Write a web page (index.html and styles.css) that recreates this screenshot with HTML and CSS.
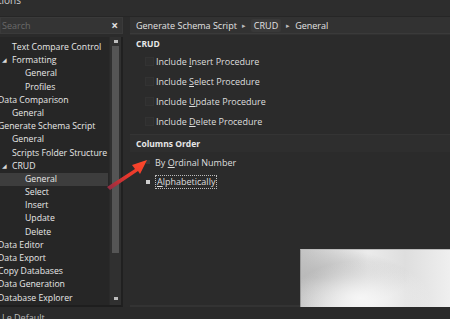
FILE: index.html
```html
<!DOCTYPE html>
<html lang="en">
<head>
    <meta charset="UTF-8">
    <title>Options</title>
    <link rel="stylesheet" href="styles.css">
</head>
<body>
    <div class="window">
        <div class="title-strip"><span class="title">tions</span></div>

        <div class="main">
            <div class="sidebar">
                <div class="search">
                    <span class="placeholder">Search</span>
                    <span class="clear">&#215;</span>
                </div>
                <div class="tree-box">
                    <ul class="tree">
                        <li class="lvl1">Text Compare Control</li>
                        <li class="lvl1 open"><span class="caret">&#9698;</span>Formatting</li>
                        <li class="lvl2">General</li>
                        <li class="lvl2">Profiles</li>
                        <li class="lvl0">Data Comparison</li>
                        <li class="lvl1">General</li>
                        <li class="lvl0">Generate Schema Script</li>
                        <li class="lvl1">General</li>
                        <li class="lvl1">Scripts Folder Structure</li>
                        <li class="lvl1 open"><span class="caret">&#9698;</span>CRUD</li>
                        <li class="lvl2 selected">General</li>
                        <li class="lvl2">Select</li>
                        <li class="lvl2">Insert</li>
                        <li class="lvl2">Update</li>
                        <li class="lvl2">Delete</li>
                        <li class="lvl0">Data Editor</li>
                        <li class="lvl0">Data Export</li>
                        <li class="lvl0">Copy Databases</li>
                        <li class="lvl0">Data Generation</li>
                        <li class="lvl0">Database Explorer</li>
                    </ul>
                    <div class="scrollbar">
                        <span class="arrow-up"></span>
                        <div class="thumb"></div>
                        <span class="arrow-down"></span>
                    </div>
                </div>
            </div>

            <div class="content">
                <div class="breadcrumb">
                    <span>Generate Schema Script</span>
                    <span class="sep">&#9656;</span>
                    <span class="crumb-box">CRUD</span>
                    <span class="sep">&#9656;</span>
                    <span>General</span>
                </div>
                <div class="page">
                    <div class="group-title">CRUD</div>
                    <div class="options">
                        <label class="check"><span class="box"></span><span>Include <u>I</u>nsert Procedure</span></label>
                        <label class="check"><span class="box"></span><span>Include <u>S</u>elect Procedure</span></label>
                        <label class="check"><span class="box"></span><span>Include <u>U</u>pdate Procedure</span></label>
                        <label class="check"><span class="box"></span><span>Include <u>D</u>elete Procedure</span></label>
                    </div>
                    <div class="group-title band">Columns Order</div>
                    <div class="radios">
                        <label class="radio"><span class="dot"></span><span>By <u>O</u>rdinal Number</span></label>
                        <label class="radio"><span class="dot on"></span><span class="focus"><u>A</u>lphabetically</span></label>
                    </div>
                    <div class="blur-patch"></div>
                </div>
            </div>
        </div>

        <div class="footer"><span class="footer-text">Le Default</span></div>

        <!-- annotation arrow drawn on top of the screenshot -->
        <svg class="red-arrow" width="46" height="34" viewBox="0 0 46 34">
            <defs>
                <linearGradient id="arrowFill" x1="0" y1="1" x2="1" y2="0">
                    <stop offset="0" stop-color="#8a2a44"/>
                    <stop offset="0.5" stop-color="#e8372c"/>
                    <stop offset="1" stop-color="#ff4a2a"/>
                </linearGradient>
            </defs>
            <path d="M1 30 L29 12 L26 8 L41 3 L34 17 L32 14 L4 33 Z" fill="url(#arrowFill)"/>
        </svg>
    </div>
</body>
</html>
```

FILE: styles.css
```css
* {
    box-sizing: border-box;
}

body {
    margin: 0;
    background: #2b2b2b;
    font-family: "Open Sans", "Noto Sans", sans-serif;
    font-size: 9px;
    color: #e6e6e6;
}

.window {
    position: relative;
    width: 450px;
    height: 319px;
    overflow: hidden;
    background: #2b2b2b;
}

.title-strip {
    height: 17px;
    background: #2d2d2d;
    border-bottom: 1px solid #262626;
    position: relative;
}

.title {
    position: absolute;
    top: -7px;
    left: -2px;
    font-size: 10px;
    color: #cfcfcf;
}

.main {
    display: flex;
    height: 290px;
}

.sidebar {
    width: 123px;
    display: flex;
    flex-direction: column;
}

.search {
    height: 17px;
    background: #343434;
    border: 1px solid #3a3a3a;
    display: flex;
    align-items: center;
    justify-content: space-between;
    padding: 0 4px 0 1px;
}

.placeholder {
    color: #6a6a6a;
}

.clear {
    font-size: 12px;
    font-weight: bold;
    color: #e0e0e0;
    line-height: 1;
}

.tree-box {
    flex: 1;
    display: flex;
    margin-top: 3px;
    background: #262626;
    border-right: 2px solid #202020;
    border-bottom: 2px solid #1e1e1e;
}

.tree {
    flex: 1;
    list-style: none;
    margin: 0;
    padding: 4px 0 0 0;
    overflow: hidden;
    font-size: 8.7px;
}

.tree li {
    height: 13.2px;
    line-height: 13.2px;
    white-space: nowrap;
    color: #e8e8e8;
    position: relative;
}

.lvl0 {
    padding-left: 0;
    margin-left: -2px;
}

.lvl1 {
    padding-left: 12px;
}

.lvl2 {
    padding-left: 25px;
}

.tree li.selected {
    background: #3d3d3d;
    margin-right: 1px;
}

.caret {
    position: absolute;
    left: 2px;
    font-size: 6px;
    color: #d8d8d8;
}

.scrollbar {
    width: 12px;
    background: #303030;
    border-left: 1px solid #2a2a2a;
    display: flex;
    flex-direction: column;
    align-items: center;
    padding: 3px 0 5px;
}

.arrow-up,
.arrow-down {
    width: 4px;
    height: 3px;
    background: #bdbdbd;
}

.thumb {
    width: 7px;
    height: 207px;
    margin: 3px 0 auto;
    background: #555555;
}

.content {
    flex: 1;
    margin-left: 7px;
    display: flex;
    flex-direction: column;
}

.breadcrumb {
    height: 17px;
    background: #323232;
    border-bottom: 1px solid #3a3a3a;
    display: flex;
    align-items: center;
    gap: 5px;
    padding-left: 6px;
    color: #e2e2e2;
}

.sep {
    font-size: 7px;
    color: #bbbbbb;
}

.crumb-box {
    background: #393939;
    border-radius: 2px;
    padding: 0 3px;
}

.page {
    flex: 1;
    position: relative;
    border-bottom: 2px solid #333333;
}

.group-title {
    font-weight: bold;
    font-size: 8.5px;
    color: #e8e8e8;
    padding: 3px 0 3px 6px;
    border-top: 1px solid #313131;
}

.group-title.band {
    margin-top: 7px;
    background: #2e2e2e;
    border-top: 1px solid #343434;
}

.options {
    display: flex;
    flex-direction: column;
    gap: 8px;
    padding: 3px 0 0 15px;
}

.check,
.radio {
    display: flex;
    align-items: center;
    height: 12px;
    color: #dedede;
    white-space: nowrap;
}

.box {
    width: 9px;
    height: 9px;
    margin-right: 2px;
    background: #2e2e2e;
    border: 1px solid #333333;
}

.radios {
    display: flex;
    flex-direction: column;
    gap: 8px;
    padding: 4px 0 0 16px;
}

.dot {
    width: 4px;
    height: 4px;
    margin-right: 5px;
    background: #3a3a3a;
}

.dot.on {
    background: #cfcfcf;
}

.focus {
    border: 1px dotted #bdbdbd;
    padding: 0 1px;
    line-height: 12px;
}

.blur-patch {
    position: absolute;
    right: 0;
    bottom: -14px;
    width: 150px;
    height: 70px;
    background:
        radial-gradient(ellipse at 40% 70%, #f6f6f6 0%, rgba(246, 246, 246, 0) 55%),
        radial-gradient(ellipse at 10% 40%, #b8b8b8 0%, rgba(184, 184, 184, 0) 50%),
        linear-gradient(90deg, #c4c4c4 0%, #d6d6d6 20%, #ebebeb 45%, #dedede 70%, #efefef 100%);
    border-left: 1px solid #9a9a9a;
    border-top: 1px solid #bcbcbc;
}

.footer {
    height: 12px;
    position: relative;
    background: #2a2a2a;
}

.footer-text {
    position: absolute;
    left: 2px;
    top: 4px;
    color: #bdbdbd;
}

.red-arrow {
    position: absolute;
    left: 106px;
    top: 157px;
}
```
